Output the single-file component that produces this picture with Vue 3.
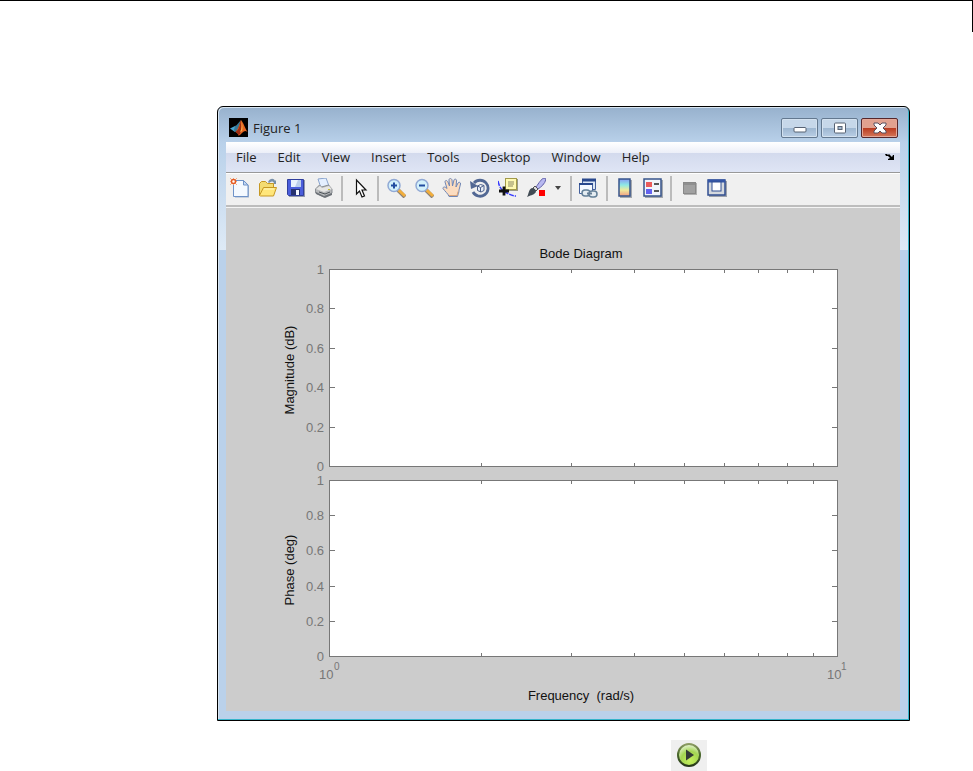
<script setup>
const menus = ['File', 'Edit', 'View', 'Insert', 'Tools', 'Desktop', 'Window', 'Help']

const left = 103
const right = 611
const axes = [
  { label: 'Magnitude (dB)', top: 62, bottom: 259, labelY: 163 },
  { label: 'Phase (deg)', top: 273, bottom: 449, labelY: 363 },
]
const decades = [2, 3, 4, 5, 6, 7, 8, 9].map((k) => Math.floor(left + (right - left) * Math.log10(k)))

function yTicks(axis) {
  return [0, 0.2, 0.4, 0.6, 0.8, 1].map((value) => ({
    value,
    y: Math.round(axis.bottom - (axis.bottom - axis.top) * value),
  }))
}

function tickPath(axis) {
  const inner = yTicks(axis).slice(1, -1)
  const horizontal = inner.map((t) => `M${left} ${t.y + 0.5}h6M${right + 1} ${t.y + 0.5}h-6`).join('')
  const vertical = decades.map((x) => `M${x + 0.5} ${axis.top}v4M${x + 0.5} ${axis.bottom + 1}v-4`).join('')
  return horizontal + vertical
}
</script>

<template>
  <div class="page">
    <div class="rule"></div>
    <main class="content">
      <section class="window" aria-label="Figure 1">
        <header class="titlebar">
          <svg class="logo" viewBox="0 0 19 19" aria-hidden="true">
            <rect width="19" height="19" fill="#000" />
            <path d="M1 10.500l5-2.500 3 3-3 3z" fill="#48a6d2" />
            <path d="M6 8c2-.5 4-4 6-6l-3 9-3 3-1-2z" fill="#3a7896" />
            <path d="M12 2c2 2 4 8 6.500 12-2-1.500-3.500-1-5 .5-1.500 1.500-2.500 3-4 3-.5-2-1.500-3-3-3.500C9 12 10.500 6 12 2z" fill="#e56520" />
            <path d="M12 2c-1 5-2 10-5.500 12 1.500.5 2.500 1.500 3 3.500 3-2 3-9 2.500-15.500z" fill="#9e2c13" />
            <path d="M12 3c1 3 1 8-1 11l2-1c1-3 .5-7-1-10z" fill="#f9b24b" />
          </svg>
          <h1 class="title">Figure 1</h1>
          <div class="controls">
            <button type="button" class="control" aria-label="Minimize">
              <svg viewBox="0 0 14 12"><rect x="1" y="5.500" width="12" height="4.500" rx="1" fill="#fff" stroke="#576273" /></svg>
            </button>
            <button type="button" class="control" aria-label="Maximize">
              <svg viewBox="0 0 14 12"><rect x="1.500" y="1" width="11" height="10" rx="1" fill="#fff" stroke="#576273" /><rect x="5" y="4.500" width="4" height="3" fill="#a3b9d2" stroke="#576273" /></svg>
            </button>
            <button type="button" class="control close" aria-label="Close">
              <svg viewBox="0 0 14 12"><path d="M1 1h4l2 2 2-2h4v2L10 6l3 3v2H9L7 9l-2 2H1V9l3-3-3-3z" fill="#fff" stroke="#58505e" stroke-linejoin="round" /></svg>
            </button>
          </div>
        </header>

        <nav class="menubar">
          <button v-for="menu in menus" :key="menu" type="button" class="menu">{{ menu }}</button>
          <button type="button" class="dock" aria-label="Dock figure">
            <svg viewBox="0 0 10 8"><path d="M0 1h2l1 1 1-1 3 3 1-2h1v5H3V6l2-1-2-2H1z" fill="#000" /></svg>
          </button>
        </nav>

        <div class="toolbar" role="toolbar">
          <button type="button" class="tool" aria-label="New figure">
            <svg viewBox="0 0 20 20">
              <path d="M5 3.500h10l4 4v12H5z" fill="#9fb1cc" />
              <path d="M3.500 2.500h10l4.500 4.500v11.500H3.500z" fill="#f4f9ff" stroke="#6e92c8" />
              <path d="M13.500 2.500V7H18z" fill="#c5d9f4" stroke="#6e92c8" />
              <path d="M0 0l7 7M7 0L0 7M3.500 0v7M0 3.500h7" stroke="#efad8a" />
              <circle cx="3.500" cy="3.500" r="2" fill="#fff" stroke="#e65c25" stroke-width="1.500" />
            </svg>
          </button>
          <button type="button" class="tool" aria-label="Open file">
            <svg viewBox="0 0 20 20">
              <path d="M10 4c2-4 6-4 7-1l1-1v4h-4l2-1c-1-2-3-2-5 0z" fill="#7890aa" />
              <path d="M1.500 17.500v-12l2-2h4l2 2h6v4" fill="#f4dc72" stroke="#c69823" />
              <path d="M1.500 17.500l4-8h13l-3 8.500h-13z" fill="#ffe67a" stroke="#c69823" />
              <path d="M6 11h10" stroke="#fff8bf" />
            </svg>
          </button>
          <button type="button" class="tool" aria-label="Save figure">
            <svg viewBox="0 0 20 20">
              <path d="M2 2h17v17H3z" fill="#9299ac" />
              <path d="M1.500 1.500h16v16h-15l-1-1z" fill="#4b5edb" stroke="#303e9c" />
              <rect x="5" y="2" width="10" height="7" fill="#e9f1fd" />
              <path d="M12 2h3v7h-6z" fill="#bbcdec" />
              <rect x="5" y="11" width="9" height="6" fill="#26316f" />
              <rect x="10" y="12" width="3" height="5" fill="#f4f7ff" />
            </svg>
          </button>
          <button type="button" class="tool" aria-label="Print figure">
            <svg viewBox="0 0 20 20">
              <path d="M4 1l8-1 3 8-8 2z" fill="#e4efff" stroke="#8aa4cc" />
              <path d="M1.500 11l4-4 2 2 7-2 3.500 4v4l-8 4-8.500-4z" fill="#b6b8ba" stroke="#8b8f94" />
              <path d="M2 11l8 3 8-3-3-3-7 2-2-2z" fill="#e6e6e4" />
              <path d="M2 14l8 4 8-3v2l-7 3-9-4z" fill="#6c7177" />
              <path d="M5 14l6 2 5-2" fill="none" stroke="#4b5157" />
              <rect x="14" y="11" width="2" height="1" fill="#c7bf3a" />
            </svg>
          </button>
          <span class="separator"></span>
          <button type="button" class="tool" aria-label="Edit plot">
            <svg viewBox="0 0 20 20"><path d="M6.500 2v14l3-3 2.500 6 2.500-1-2.500-6h4z" fill="#fff" stroke="#111" stroke-width="1.200" /></svg>
          </button>
          <span class="separator"></span>
          <button type="button" class="tool" aria-label="Zoom in">
            <svg viewBox="0 0 20 20">
              <path d="M12 12l7 7" stroke="#8a8178" stroke-width="4" />
              <path d="M12 11.500l7 6.500" stroke="#f2ae3d" stroke-width="3" />
              <circle cx="8" cy="7.500" r="6" fill="#d3f1fb" stroke="#91a9d5" stroke-width="1.500" />
              <path d="M5 7.500h6M8 4.500v6" stroke="#214da0" stroke-width="2" />
            </svg>
          </button>
          <button type="button" class="tool" aria-label="Zoom out">
            <svg viewBox="0 0 20 20">
              <path d="M12 12l7 7" stroke="#8a8178" stroke-width="4" />
              <path d="M12 11.500l7 6.500" stroke="#f2ae3d" stroke-width="3" />
              <circle cx="8" cy="7.500" r="6" fill="#d3f1fb" stroke="#91a9d5" stroke-width="1.500" />
              <path d="M5 7.500h6" stroke="#214da0" stroke-width="2" />
            </svg>
          </button>
          <button type="button" class="tool" aria-label="Pan">
            <svg viewBox="0 0 20 20">
              <path d="M7 18.500c-1-3-4-5-6-8 0-2 2-2 4 0L3 4c0-2 2-2 3 0l1.500 4L7 2c0-2 2.500-2 3 0l.5 6L12 2c.5-1.500 3-1 2.500 1L14 9l2-4c1-1.500 3-.5 2.500 1L17 12c0 3-1 4-1.500 6.500z" fill="#fbdcc0" stroke="#6f86b5" />
              <path d="M7 17.500h8l1-4" fill="none" stroke="#dba67c" />
            </svg>
          </button>
          <button type="button" class="tool" aria-label="Rotate 3D">
            <svg viewBox="0 0 20 20">
              <path d="M4 5a8 8 0 1 1-1 9" fill="none" stroke="#526894" stroke-width="2.800" />
              <path d="M0 3l1 8 7-3z" fill="#526894" />
              <path d="M7.500 8l3-1.500 3.500 1v5L11 14l-3.500-1.500zM7.500 8l3 1.500 3.500-2M10.500 9.500V14" fill="#e6edf7" stroke="#4d618c" />
            </svg>
          </button>
          <button type="button" class="tool" aria-label="Data cursor">
            <svg viewBox="0 0 20 20">
              <path d="M0 3c1 5 3 9 7 11s7 4 11 4" fill="none" stroke="#3439ff" stroke-width="1.500" stroke-dasharray="5 1" />
              <rect x="8" y="1" width="12" height="12" fill="#999a87" />
              <rect x="7.500" y=".5" width="11" height="11" fill="#fffab3" stroke="#a39a49" />
              <path d="M10 4h6M10 6h6M10 8h5" stroke="#8c8864" />
              <path d="M1 13h10M6 8.500v9" stroke="#111" stroke-width="2.800" />
            </svg>
          </button>
          <button type="button" class="tool" aria-label="Brush">
            <svg viewBox="0 0 20 20">
              <path d="M18 0l2 1c-1 5-5 8-8 10l-2-2c3-4 5-8 8-9z" fill="#b7b8f0" stroke="#6261aa" />
              <path d="M9 8l3 3-2 2-3-3z" fill="#ddd" stroke="#555" />
              <path d="M6 10c2 0 4 2 4 4-3 4-6 3-9 5 2-3 1-7 5-9z" fill="#414b54" />
              <rect x="13" y="12" width="6" height="6" fill="#f00" />
            </svg>
          </button>
          <button type="button" class="tool drop" aria-label="Brush options">
            <svg viewBox="0 0 16 20"><path d="M4 8h6l-3 4z" fill="#444" /></svg>
          </button>
          <span class="separator"></span>
          <button type="button" class="tool" aria-label="Link plot">
            <svg viewBox="0 0 20 20">
              <path d="M3.500 1.500h13v10h-13z" fill="#dbe6f5" stroke="#435f9c" />
              <path d="M3 2h14" stroke="#29488d" stroke-width="3" />
              <path d="M.5 5.500h13v10H.5z" fill="#f5f9ff" stroke="#435f9c" />
              <path d="M0 6h14" stroke="#29488d" stroke-width="2" />
              <rect x="3" y="12" width="8" height="6" rx="3" fill="#e5edf2" stroke="#637f97" stroke-width="1.500" />
              <rect x="10" y="13" width="8" height="6" rx="3" fill="#e5edf2" stroke="#637f97" stroke-width="1.500" />
              <path d="M8 15.500h5" stroke="#647d94" stroke-width="2" />
            </svg>
          </button>
          <span class="separator"></span>
          <button type="button" class="tool" aria-label="Insert colorbar">
            <svg viewBox="0 0 20 20">
              <defs>
                <linearGradient id="spectrum" x1="0" y1="0" x2="0" y2="1">
                  <stop offset="0" stop-color="#879af3" />
                  <stop offset=".35" stop-color="#8de9e5" />
                  <stop offset=".65" stop-color="#efea9d" />
                  <stop offset="1" stop-color="#f29d82" />
                </linearGradient>
              </defs>
              <rect x="5" y="2" width="12" height="18" fill="#a4a8ae" />
              <rect x="4" y="1" width="11" height="17" fill="url(#spectrum)" stroke="#37548b" stroke-width="1.500" />
            </svg>
          </button>
          <button type="button" class="tool" aria-label="Insert legend">
            <svg viewBox="0 0 20 20">
              <rect x="2" y="2" width="18" height="18" fill="#a4a8ae" />
              <rect x="1" y="1" width="17" height="17" fill="#f0f4fc" stroke="#37548b" stroke-width="1.500" />
              <rect x="3" y="4" width="6" height="5" fill="#ea5c5c" />
              <rect x="3" y="11" width="6" height="5" fill="#6362ef" />
              <path d="M11 6h5M11 13h5" stroke="#222" stroke-width="1.500" />
            </svg>
          </button>
          <span class="separator"></span>
          <button type="button" class="tool" aria-label="Hide plot tools">
            <svg viewBox="0 0 20 20">
              <rect x="5" y="5" width="13" height="12" fill="#b2b2b2" />
              <rect x="4.500" y="4.500" width="12" height="11" fill="#a1a1a1" stroke="#898989" />
              <path d="M5 6h11" stroke="#8f8f8f" stroke-width="2" />
            </svg>
          </button>
          <button type="button" class="tool" aria-label="Show plot tools and dock figure">
            <svg viewBox="0 0 20 20">
              <rect x="2" y="3" width="18" height="16" fill="#9ca1aa" />
              <rect x="1" y="2" width="17" height="15" fill="#d5d9de" stroke="#314e91" stroke-width="1.500" />
              <path d="M1 3h17" stroke="#3556a6" stroke-width="3" />
              <rect x="5" y="4" width="9" height="9" fill="#fff" stroke="#314e91" />
            </svg>
          </button>
        </div>

        <svg class="figure" viewBox="0 0 674 504" role="img" aria-label="Bode Diagram">
          <text x="355" y="51" text-anchor="middle" class="caption">Bode Diagram</text>
          <g v-for="axis in axes" :key="axis.label">
            <rect :x="left + 0.5" :y="axis.top + 0.5" :width="right - left" :height="axis.bottom - axis.top" class="box" />
            <path :d="tickPath(axis)" class="ticks" />
            <text v-for="tick in yTicks(axis)" :key="tick.value" x="98" :y="tick.y + 5" text-anchor="end" class="value">{{ tick.value }}</text>
            <text :transform="`translate(68 ${axis.labelY}) rotate(-90)`" text-anchor="middle" class="caption">{{ axis.label }}</text>
          </g>
          <text x="93" y="472" class="value">10</text>
          <text x="108" y="463" class="exponent">0</text>
          <text x="601" y="472" class="value">10</text>
          <text x="615" y="463" class="exponent">1</text>
          <text x="355" y="493" text-anchor="middle" class="caption">Frequency&nbsp; (rad/s)</text>
        </svg>
      </section>

      <button type="button" class="run" aria-label="Run">
        <svg viewBox="0 0 26 26">
          <defs>
            <radialGradient id="glow" cx=".55" cy=".75" r=".75">
              <stop offset="0" stop-color="#c6f25c" />
              <stop offset=".55" stop-color="#a3d552" />
              <stop offset="1" stop-color="#e9f5da" />
            </radialGradient>
            <linearGradient id="rim" x1="0" y1="0" x2="0" y2="1">
              <stop offset="0" stop-color="#8b9b62" />
              <stop offset=".5" stop-color="#47652a" />
              <stop offset="1" stop-color="#273818" />
            </linearGradient>
          </defs>
          <circle cx="13" cy="13" r="11" fill="url(#glow)" stroke="url(#rim)" stroke-width="2" />
          <path d="M10 7.500l8 5.500-8 5.500z" fill="#333b35" />
        </svg>
      </button>
    </main>
  </div>
</template>

<style>
body {
  margin: 0;
  background: #fff;
}
</style>

<style scoped>
.page {
  font-family: "Open Sans", "Noto Sans", sans-serif;
}

.rule {
  box-sizing: border-box;
  height: 32px;
  border-top: 1px solid #000;
  border-right: 1px solid #000;
}

.content {
  display: flex;
  flex-direction: column;
  gap: 19px;
  padding: 74px 63px 0 217px;
}

.window {
  box-sizing: border-box;
  padding: 0 9px 9px 8px;
  border: 1px solid #000;
  border-radius: 6px 6px 0 0;
  background: linear-gradient(#97b1cd 0, #b9d1ea 36px, #deeaf6 143px, #bad1ea 143px);
  box-shadow: inset -1px -1px #35b4ca, inset 1px 1px #d8e5f1;
}

.titlebar {
  display: flex;
  align-items: center;
  gap: 5px;
  height: 35px;
  padding: 6px 2px 0 3px;
  box-sizing: border-box;
}

.logo {
  width: 19px;
  height: 19px;
}

.title {
  margin: 0;
  font-size: 13px;
  font-weight: 400;
  line-height: 20px;
  color: #222;
}

.controls {
  display: flex;
  gap: 3px;
  margin-left: auto;
}

.control {
  display: grid;
  place-items: center;
  box-sizing: border-box;
  width: 37px;
  height: 20px;
  padding: 0;
  border: 1px solid #63788f;
  border-radius: 2px;
  background: linear-gradient(#c6d7e9 50%, #9db6d0 50%, #b9cee5);
  box-shadow: inset 0 0 0 1px #d3e1ef;
}

.control svg {
  width: 14px;
  height: 12px;
}

.close {
  border-color: #56272b;
  background: linear-gradient(#e1a18f 50%, #b93a1f 50%, #d5785b);
  box-shadow: inset 0 0 0 1px #e4a899;
}

.menubar {
  display: flex;
  align-items: center;
  gap: 21px;
  box-sizing: border-box;
  height: 31px;
  padding: 0 5px 0 10px;
  border-bottom: 1px solid #999;
  background: linear-gradient(#fff 0, #eceff8 11px, #d3daed 11px, #dfe5f5 100%);
}

.menu {
  padding: 0;
  border: 0;
  background: none;
  font-family: inherit;
  font-size: 13px;
  line-height: 20px;
  color: #222;
}

.dock {
  display: flex;
  margin-left: auto;
  padding: 0;
  border: 0;
  background: none;
}

.dock svg {
  width: 10px;
  height: 8px;
}

.toolbar {
  display: flex;
  align-items: center;
  box-sizing: border-box;
  height: 34px;
  padding-bottom: 3px;
  border-top: 1px solid #fff;
  border-bottom: 2px solid #bdbdbd;
  background: #f0f0f0;
}

.tool {
  display: flex;
  justify-content: center;
  width: 28px;
  padding: 0;
  border: 0;
  background: none;
}

.tool svg {
  width: 20px;
  height: 20px;
}

.drop {
  width: 17px;
}

.drop svg {
  width: 16px;
}

.separator {
  width: 2px;
  height: 25px;
  margin: 0 3px;
  background: #bbb;
}

.figure {
  display: block;
  width: 100%;
  box-sizing: border-box;
  background: #ccc;
  box-shadow: inset 0 1px #f4f4f4;
  font-family: "Liberation Sans", Arial, sans-serif;
}

.box {
  fill: #fff;
  stroke: #777;
}

.ticks {
  fill: none;
  stroke: #777;
}

.caption {
  font-size: 13px;
  fill: #111;
}

.value {
  font-size: 13px;
  fill: #777;
}

.exponent {
  font-size: 10px;
  fill: #777;
}

.run {
  display: flex;
  justify-content: center;
  width: 36px;
  height: 31px;
  margin-left: 454px;
  padding: 2px 0 0;
  border: 0;
  background: #efefef;
}

.run svg {
  width: 26px;
  height: 26px;
}
</style>
